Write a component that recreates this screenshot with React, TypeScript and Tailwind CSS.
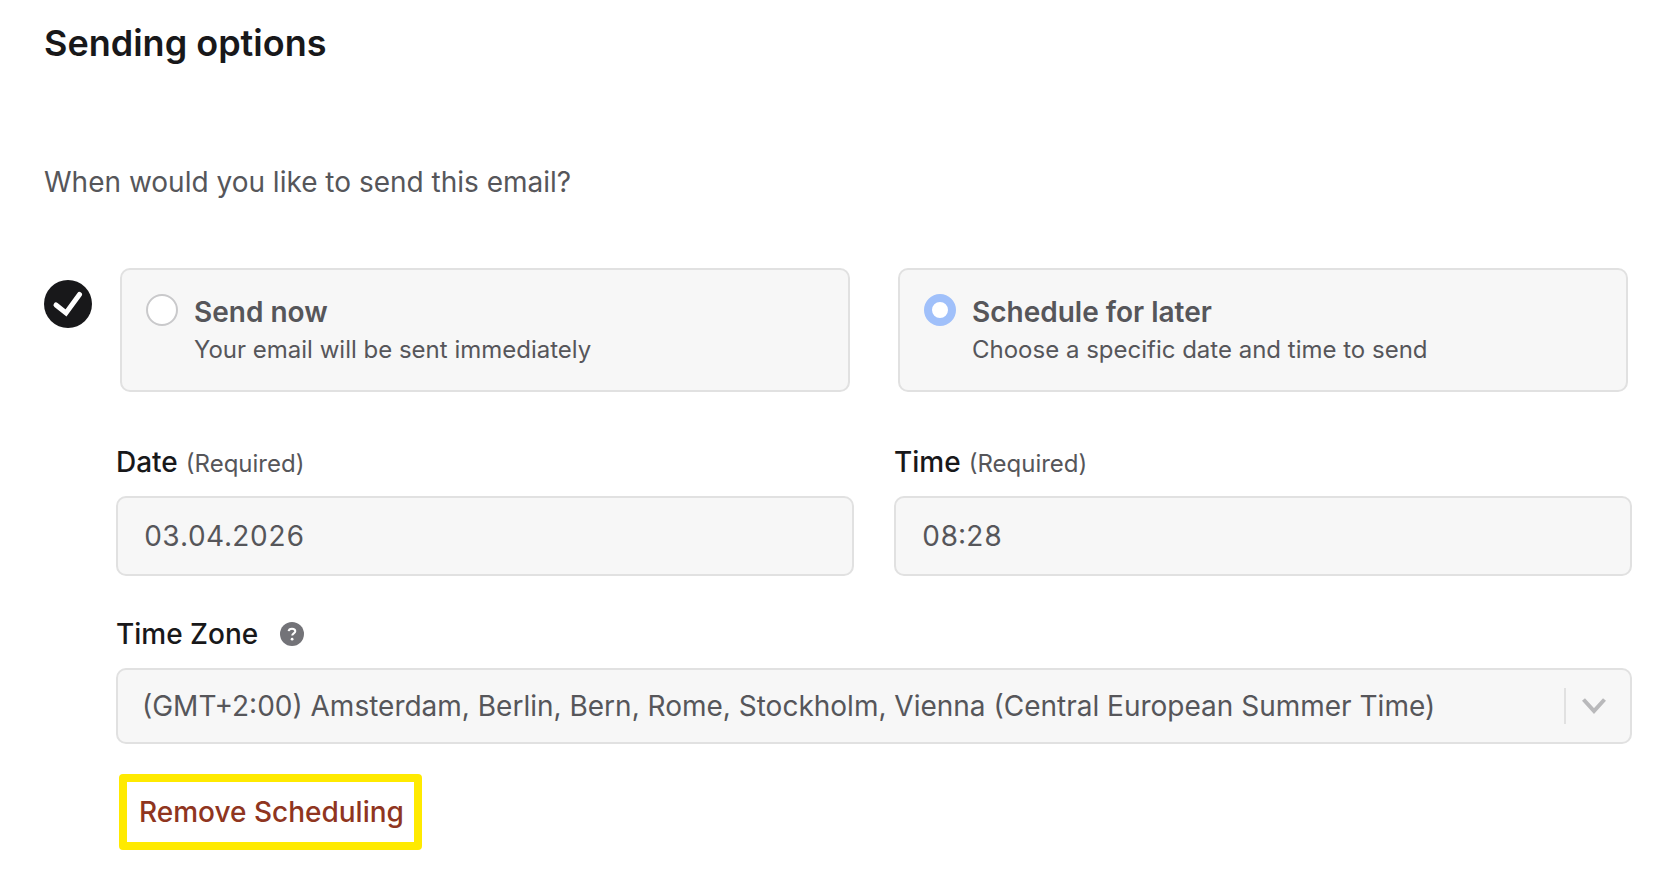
import { useState } from 'react'
import clsx from 'clsx'

const control =
  'w-full rounded-[10px] border-2 border-[#e1e1e1] bg-[#f7f7f7] text-[28px] text-[#56565a] outline-none'

const options = [
  {
    value: 'now',
    title: 'Send now',
    description: 'Your email will be sent immediately',
  },
  {
    value: 'later',
    title: 'Schedule for later',
    description: 'Choose a specific date and time to send',
  },
]

function CheckBadge() {
  return (
    <svg viewBox="0 0 48 48" className="mt-3 size-12 shrink-0" aria-hidden="true">
      <circle cx="24" cy="24" r="24" fill="#18181a" />
      <path
        d="M12 25 22 33 35.5 14.5"
        fill="none"
        stroke="#fff"
        strokeWidth="5"
        strokeLinecap="round"
      />
    </svg>
  )
}

function HelpIcon() {
  return (
    <svg viewBox="0 0 24 24" className="size-6" aria-hidden="true">
      <circle cx="12" cy="12" r="12" fill="#737378" />
      <path
        d="M8.6 9.2C8.8 7.6 10.1 6.7 12 6.7s3.3 1 3.3 2.6c0 2-3.1 2.1-3.1 4.2"
        fill="none"
        stroke="#fff"
        strokeWidth="2"
      />
      <circle cx="12.1" cy="17.2" r="1.4" fill="#fff" />
    </svg>
  )
}

function Field({
  id,
  label,
  defaultValue,
}: {
  id: string
  label: string
  defaultValue: string
}) {
  return (
    <div>
      <label htmlFor={id} className="flex h-9 items-baseline gap-2">
        <span className="text-[28px]/9 font-medium text-[#18181a]">{label}</span>
        <span className="text-2xl/9">(Required)</span>
      </label>
      <input
        id={id}
        type="text"
        defaultValue={defaultValue}
        className={clsx(control, 'mt-4 block h-20 px-[26px] tabular-nums')}
      />
    </div>
  )
}

export default function App() {
  const [selected, setSelected] = useState('later')

  return (
    <main className="min-h-screen bg-white pt-5 pr-[34px] pb-6 pl-11 font-['Inter',sans-serif] text-[#56565a]">
      <h1 className="text-4xl/[46px] font-semibold text-[#18181a]">
        Sending options
      </h1>
      <p id="send-question" className="mt-24 text-[28px]/10">
        When would you like to send this email?
      </p>

      <form className="mt-[66px] flex items-start gap-6">
        <CheckBadge />
        <div className="min-w-0 flex-1">
          <div
            role="radiogroup"
            aria-labelledby="send-question"
            className="grid grid-cols-2 gap-10"
          >
            {options.map(({ value, title, description }) => (
              <label
                key={value}
                className="mx-1 flex gap-4 rounded-[10px] border-2 border-[#e1e1e1] bg-[#f7f7f7] px-6 pt-6 pb-[22px]"
              >
                <input
                  type="radio"
                  name="send"
                  value={value}
                  checked={selected === value}
                  onChange={() => setSelected(value)}
                  className="size-8 shrink-0 appearance-none rounded-full border-2 border-[#c9c9cb] bg-white checked:border-8 checked:border-[#a0c0fa]"
                />
                <span>
                  <span className="block text-[28px]/9 font-semibold">{title}</span>
                  <span className="mt-0.5 block text-2xl/9">{description}</span>
                </span>
              </label>
            ))}
          </div>

          <div className="mt-[52px] grid grid-cols-2 gap-10">
            <Field id="date" label="Date" defaultValue="03.04.2026" />
            <Field id="time" label="Time" defaultValue="08:28" />
          </div>

          <div className="mt-10 flex items-center gap-[22px]">
            <label
              htmlFor="timezone"
              className="text-[28px]/9 font-medium text-[#18181a]"
            >
              Time Zone
            </label>
            <button type="button" aria-label="Time zone help">
              <HelpIcon />
            </button>
          </div>
          <div className="relative mt-4">
            <select
              id="timezone"
              className={clsx(control, 'block h-[76px] appearance-none pr-20 pl-6')}
            >
              <option>
                (GMT+2:00) Amsterdam, Berlin, Bern, Rome, Stockholm, Vienna (Central
                European Summer Time)
              </option>
            </select>
            <div className="pointer-events-none absolute inset-y-5 right-[26px] flex items-center gap-4">
              <span className="h-full w-0.5 bg-[#e1e1e1]" />
              <svg viewBox="0 0 24 16" className="h-4 w-6" aria-hidden="true">
                <path
                  d="M1.5 1.5 12 13 22.5 1.5"
                  fill="none"
                  stroke="#b9b9bb"
                  strokeWidth="4"
                />
              </svg>
            </div>
          </div>

          <button
            type="button"
            className="mt-[30px] ml-[3px] h-[76px] rounded-sm border-8 border-[#ffea00] pr-2.5 pl-3 text-[28px] font-medium text-[#8f3520]"
          >
            Remove Scheduling
          </button>
        </div>
      </form>
    </main>
  )
}
